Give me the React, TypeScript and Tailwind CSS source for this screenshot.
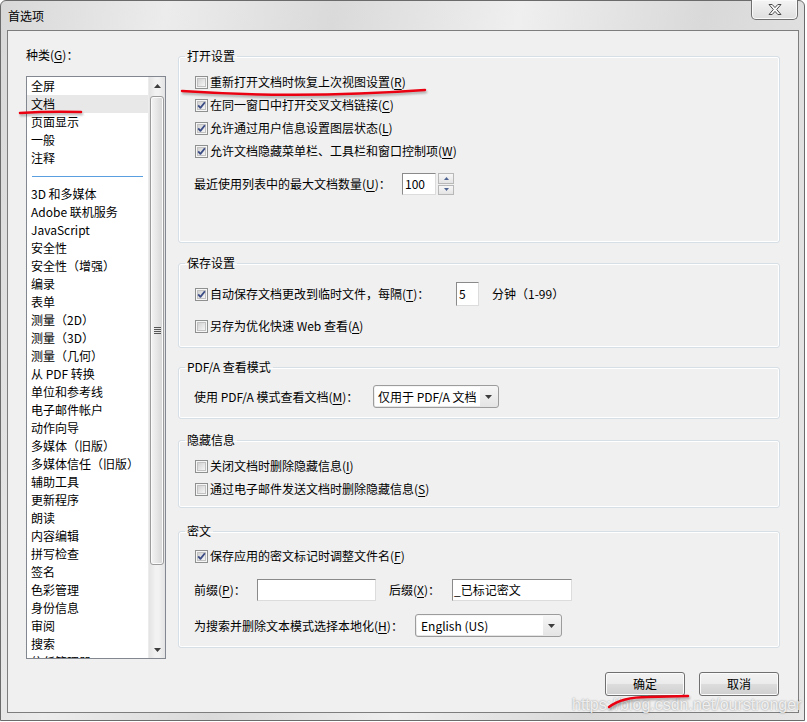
import React from "react";

const categories = [
  "全屏",
  "文档",
  "页面显示",
  "一般",
  "注释",
  "-",
  "3D 和多媒体",
  "Adobe 联机服务",
  "JavaScript",
  "安全性",
  "安全性（增强）",
  "编录",
  "表单",
  "测量（2D）",
  "测量（3D）",
  "测量（几何）",
  "从 PDF 转换",
  "单位和参考线",
  "电子邮件帐户",
  "动作向导",
  "多媒体（旧版）",
  "多媒体信任（旧版）",
  "辅助工具",
  "更新程序",
  "朗读",
  "内容编辑",
  "拼写检查",
  "签名",
  "色彩管理",
  "身份信息",
  "审阅",
  "搜索",
  "信任管理器",
];

function Key({ k }: { k: string }) {
  return (
    <>
      (<span className="underline underline-offset-2">{k}</span>)
    </>
  );
}

function CheckBox({ checked }: { checked?: boolean }) {
  return (
    <svg width="13" height="13" viewBox="0 0 13 13" className="shrink-0 ml-px">
      <defs>
        <linearGradient id="cbfill" x1="0" y1="0" x2="1" y2="1">
          <stop offset="0" stopColor="#cfcfcf" />
          <stop offset="1" stopColor="#f8f8f8" />
        </linearGradient>
      </defs>
      <rect x="0.5" y="0.5" width="12" height="12" fill="#f6f6f6" stroke="#8e8f8f" />
      <rect x="2.5" y="2.5" width="8" height="8" fill="url(#cbfill)" stroke="#c2c2c2" />
      {checked && (
        <path d="M3.2 6.4 L5.4 8.9 L9.9 3.2" fill="none" stroke="#3c4d86" strokeWidth="1.8" strokeLinejoin="round" />
      )}
    </svg>
  );
}

function Check({ checked, children }: { checked?: boolean; children: React.ReactNode }) {
  return (
    <div className="flex items-center h-[18px]">
      <CheckBox checked={checked} />
      <span className="ml-[2px] whitespace-nowrap">{children}</span>
    </div>
  );
}

function Arrow({ up }: { up?: boolean }) {
  return (
    <svg width="7" height="4" viewBox="0 0 7 4">
      <path d={up ? "M0 4 L3.5 0 L7 4 Z" : "M0 0 L7 0 L3.5 4 Z"} fill="#3d3d3d" />
    </svg>
  );
}

function Group({ title, children, className }: { title: string; children: React.ReactNode; className: string }) {
  return (
    <fieldset className={`border border-[#d5dfe5] rounded-[3px] shadow-[inset_0_0_0_1px_#ffffff] ${className}`}>
      <legend className="ml-[6px] px-[2px] leading-[16px]">{title}</legend>
      {children}
    </fieldset>
  );
}

export default function App() {
  return (
    <div className="relative w-[807px] h-[722px] bg-white overflow-hidden font-['Noto_Sans_CJK_SC',sans-serif] text-[12px] leading-[16px] text-black">
      {/* window frame */}
      <div className="flex flex-col w-[805px] h-[721px] border border-[#6b6b6b] rounded-t-[6px] bg-[linear-gradient(100deg,#d8d8d8_0%,#ececec_18%,#dadada_36%,#efefef_56%,#d9d9d9_76%,#e7e7e7_100%)]">
        <div className="flex items-start justify-between h-[29px] shrink-0">
          <span className="pl-[7px] mt-[7px]">首选项</span>
          <button className="mr-[6px] -mt-px w-[47px] h-[20px] flex items-center justify-center rounded-b-[5px] border border-t-0 border-[#6f6f6f] bg-[linear-gradient(#f4f4f4,#dedede)] shadow-[inset_0_0_0_1px_#fafafa]">
            <svg width="14" height="11" viewBox="0 0 14 11">
              <polygon
                points="1,0.5 4.2,0.5 7,3.6 9.8,0.5 13,0.5 8.7,5.5 13,10.5 9.8,10.5 7,7.4 4.2,10.5 1,10.5 5.3,5.5"
                fill="#f9f9f9"
                stroke="#4a4a4a"
                strokeWidth="1"
                strokeLinejoin="round"
              />
            </svg>
          </button>
        </div>

        <div className="flex-1 flex pl-[6px] pr-[5px] pb-[7px]">
          {/* client area */}
          <div className="flex-1 flex border border-[#7d7d7d] bg-[#f0f0f0] pl-[18px] pr-[18px]">
            {/* category list */}
            <div className="flex flex-col pt-[16px] w-[140px] shrink-0">
              <div className="h-[16px]">
                种类<Key k="G" />：
              </div>
              <div className="mt-[13px] h-[583px] flex border border-[#828790] bg-white overflow-hidden">
                <div className="flex-1 flex flex-col overflow-hidden">
                  {categories.map((c) =>
                    c === "-" ? (
                      <div key="sep" className="h-[18px] shrink-0 flex items-center px-[5px]">
                        <div className="h-px w-full bg-[#5aa0e0]" />
                      </div>
                    ) : (
                      <div
                        key={c}
                        className={`h-[18px] shrink-0 pl-[4px] leading-[18px] whitespace-nowrap ${c === "文档" ? "bg-[#e8e8e8]" : ""}`}
                      >
                        {c}
                      </div>
                    )
                  )}
                </div>
                <div className="w-[17px] shrink-0 flex flex-col bg-[linear-gradient(90deg,#e3e3e3,#f2f2f2_40%,#f2f2f2_60%,#e3e3e3)] border-l border-[#ececec]">
                  <div className="h-[17px] flex items-center justify-center">
                    <Arrow up />
                  </div>
                  <div className="flex-1 px-[1px] pt-[2px]">
                    <div className="h-[469px] rounded-[3px] border border-[#9c9c9c] bg-[linear-gradient(90deg,#f4f4f4,#e6e6e6_50%,#d5d5d5)] shadow-[inset_0_0_0_1px_#fbfbfb] flex flex-col items-center justify-center gap-[1px]">
                      <div className="w-[7px] h-px bg-[#555]" />
                      <div className="w-[7px] h-px bg-[#555]" />
                      <div className="w-[7px] h-px bg-[#555]" />
                      <div className="w-[7px] h-px bg-[#555]" />
                    </div>
                  </div>
                  <div className="h-[17px] flex items-center justify-center">
                    <Arrow />
                  </div>
                </div>
              </div>
            </div>

            {/* settings */}
            <div className="ml-[12px] flex-1 flex flex-col pt-[17px]">
              <Group title="打开设置" className="">
                <div className="pl-[15px] pt-[9px] pb-[47px] flex flex-col">
                  <div className="flex flex-col gap-[5px]">
                    <Check>
                      重新打开文档时恢复上次视图设置<Key k="R" />
                    </Check>
                    <Check checked>
                      在同一窗口中打开交叉文档链接<Key k="C" />
                    </Check>
                    <Check checked>
                      允许通过用户信息设置图层状态<Key k="L" />
                    </Check>
                    <Check checked>
                      允许文档隐藏菜单栏、工具栏和窗口控制项<Key k="W" />
                    </Check>
                  </div>
                  <div className="mt-[13px] flex items-center h-[22px]">
                    <span className="w-[208px] whitespace-nowrap">
                      最近使用列表中的最大文档数量<Key k="U" />：
                    </span>
                    <div className="w-[34px] h-[22px] flex items-center pl-[2px] bg-white border border-[#dcdcdc] border-t-[#8a8a8a] border-l-[#8a8a8a]">
                      100
                    </div>
                    <div className="ml-[2px] w-[16px] h-[22px] flex flex-col gap-px">
                      <div className="flex-1 flex items-center justify-center border border-[#b8b8b8] bg-[linear-gradient(#f7f7f7,#e4e4e4)]">
                        <svg width="5" height="3" viewBox="0 0 5 3">
                          <path d="M0 3 L2.5 0 L5 3 Z" fill="#4f6390" />
                        </svg>
                      </div>
                      <div className="flex-1 flex items-center justify-center border border-[#b8b8b8] bg-[linear-gradient(#f7f7f7,#e4e4e4)]">
                        <svg width="5" height="3" viewBox="0 0 5 3">
                          <path d="M0 0 L5 0 L2.5 3 Z" fill="#4f6390" />
                        </svg>
                      </div>
                    </div>
                  </div>
                </div>
              </Group>

              <Group title="保存设置" className="mt-[12px]">
                <div className="pl-[15px] pt-[11px] pb-[12px] flex flex-col">
                  <div className="flex items-center h-[24px]">
                    <CheckBox checked />
                    <span className="ml-[2px] w-[246px] whitespace-nowrap">
                      自动保存文档更改到临时文件，每隔<Key k="T" />：
                    </span>
                    <div className="w-[23px] h-[24px] flex items-center pl-[2px] bg-white border border-[#dcdcdc] border-t-[#8a8a8a] border-l-[#8a8a8a]">
                      5
                    </div>
                    <span className="ml-[13px]">分钟（1-99）</span>
                  </div>
                  <div className="mt-[11px]">
                    <Check>
                      另存为优化快速 Web 查看<Key k="A" />
                    </Check>
                  </div>
                </div>
              </Group>

              <Group title="PDF/A 查看模式" className="mt-[11px]">
                <div className="pl-[15px] pt-[10px] pb-[10px] flex items-center h-[43px]">
                  <span className="w-[179px] whitespace-nowrap">
                    使用 PDF/A 模式查看文档<Key k="M" />：
                  </span>
                  <div className="w-[126px] h-[23px] flex p-px rounded-[3px] border border-[#9c9c9c] bg-[linear-gradient(#f6f6f6,#e4e4e4)]">
                    <div className="flex-1 flex items-center pl-[3px] bg-white whitespace-nowrap">仅用于 PDF/A 文档</div>
                    <div className="w-[17px] flex items-center justify-center">
                      <Arrow />
                    </div>
                  </div>
                </div>
              </Group>

              <Group title="隐藏信息" className="mt-[13px]">
                <div className="pl-[15px] pt-[9px] pb-[9px] flex flex-col gap-[5px]">
                  <Check>
                    关闭文档时删除隐藏信息<Key k="I" />
                  </Check>
                  <Check>
                    通过电子邮件发送文档时删除隐藏信息<Key k="S" />
                  </Check>
                </div>
              </Group>

              <Group title="密文" className="mt-[15px]">
                <div className="pl-[15px] pt-[8px] pb-[10px] flex flex-col">
                  <Check checked>
                    保存应用的密文标记时调整文件名<Key k="F" />
                  </Check>
                  <div className="mt-[14px] flex items-center h-[22px]">
                    <span className="w-[63px] whitespace-nowrap">
                      前缀<Key k="P" />：
                    </span>
                    <div className="w-[119px] h-[22px] bg-white border border-[#dcdcdc] border-t-[#8a8a8a] border-l-[#8a8a8a]" />
                    <span className="ml-[13px] w-[63px] whitespace-nowrap">
                      后缀<Key k="X" />：
                    </span>
                    <div className="w-[120px] h-[22px] flex items-center pl-[1px] bg-white border border-[#dcdcdc] border-t-[#8a8a8a] border-l-[#8a8a8a] whitespace-nowrap">
                      _已标记密文
                    </div>
                  </div>
                  <div className="mt-[13px] flex items-center h-[23px]">
                    <span className="w-[221px] whitespace-nowrap">
                      为搜索并删除文本模式选择本地化<Key k="H" />：
                    </span>
                    <div className="w-[147px] h-[23px] flex p-px rounded-[3px] border border-[#9c9c9c] bg-[linear-gradient(#f6f6f6,#e4e4e4)]">
                      <div className="flex-1 flex items-center pl-[4px] bg-white">English (US)</div>
                      <div className="w-[17px] flex items-center justify-center">
                        <Arrow />
                      </div>
                    </div>
                  </div>
                </div>
              </Group>

              <div className="mt-[24px] flex justify-end gap-[14px] pr-px">
                <button className="w-[80px] h-[24px] rounded-[3px] border border-[#707070] bg-[linear-gradient(#f2f2f2_0%,#ebebeb_50%,#dddddd_50%,#cfcfcf_100%)] shadow-[inset_0_0_0_1px_#fbfbfb]">
                  确定
                </button>
                <button className="w-[80px] h-[24px] rounded-[3px] border border-[#707070] bg-[linear-gradient(#f2f2f2_0%,#ebebeb_50%,#dddddd_50%,#cfcfcf_100%)] shadow-[inset_0_0_0_1px_#fbfbfb]">
                  取消
                </button>
              </div>
            </div>
          </div>
        </div>
      </div>

      {/* watermark */}
      <div className="absolute left-[572px] top-[696px] text-[16px] leading-[18px] font-['Liberation_Sans',sans-serif] text-white/80 [text-shadow:0_0_2px_rgba(0,0,0,0.45)] pointer-events-none">
        https://blog.csdn.net/ourstronger
      </div>

      {/* red annotation strokes */}
      <svg
        className="absolute inset-0 pointer-events-none drop-shadow-[1px_2px_1px_rgba(0,0,0,0.3)]"
        width="807"
        height="722"
        viewBox="0 0 807 722"
      >
        <g fill="none" stroke="#ea0010" strokeWidth="2.5" strokeLinecap="round">
          <path d="M20 113 Q50 111 81 112" />
          <path d="M182 91 Q300 99 425 90" />
          <path d="M609 707 Q622 697 648 697 L688 696" />
        </g>
      </svg>
    </div>
  );
}
